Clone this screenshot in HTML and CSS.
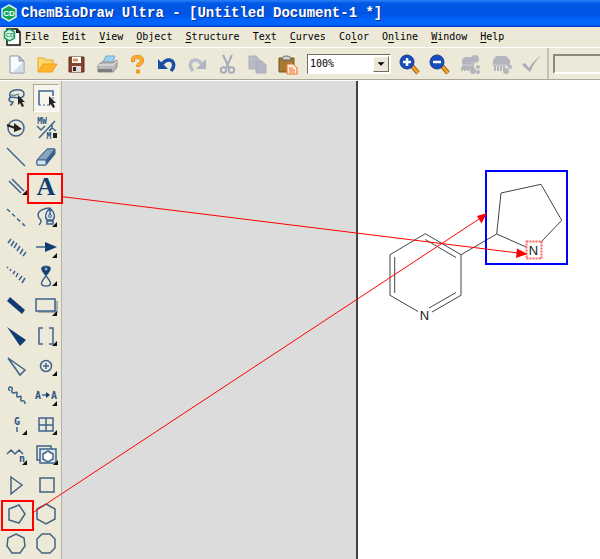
FILE: index.html
```html
<!DOCTYPE html>
<html lang="en">
<head>
  <meta charset="UTF-8" />
  <meta name="viewport" content="width=device-width, initial-scale=1" />
  <title>ChemBioDraw Ultra - [Untitled Document-1 *]</title>
  <link rel="stylesheet" href="styles.css">
</head>
<body>

<!-- Title bar -->
<header class="title-bar">
  <svg class="app-icon" width="18" height="18" viewBox="0 0 18 18">
    <path d="M9 1l7 4v8l-7 4-7-4V5z" fill="#12a35a" stroke="#d8f5e4" stroke-width="1.5"/>
    <text class="logo-text" x="9" y="12" fill="#fff">CD</text>
  </svg>
  <h1 class="title-text">ChemBioDraw Ultra - [Untitled Document-1 *]</h1>
</header>

<!-- Menu -->
<nav class="menu-bar">
  <svg class="doc-icon" width="18" height="18" viewBox="0 0 18 18">
    <path d="M4 1h10l3 3v13H4z" fill="#fff" stroke="#111" stroke-width="1.500"/>
    <path d="M13 1v4h4" fill="#111"/>
    <path d="M6.500 1l5 3v6l-5 3-5-3V4z" fill="#dff3e8" stroke="#1c9c5c" stroke-width="1.500"/>
    <text class="logo-text logo-small" x="7" y="9" fill="#1c9c5c">CD</text>
  </svg>
  <a href="#" class="menu-link"><u>F</u>ile</a>
  <a href="#" class="menu-link"><u>E</u>dit</a>
  <a href="#" class="menu-link"><u>V</u>iew</a>
  <a href="#" class="menu-link"><u>O</u>bject</a>
  <a href="#" class="menu-link"><u>S</u>tructure</a>
  <a href="#" class="menu-link">Te<u>x</u>t</a>
  <a href="#" class="menu-link"><u>C</u>urves</a>
  <a href="#" class="menu-link">Co<u>l</u>or</a>
  <a href="#" class="menu-link">O<u>n</u>line</a>
  <a href="#" class="menu-link"><u>W</u>indow</a>
  <a href="#" class="menu-link"><u>H</u>elp</a>
</nav>

<!-- Toolbar -->
<div class="toolbar">
  <button class="bar-btn" aria-label="New">
    <svg viewBox="0 0 24 24"><path d="M5 4h9l5 5v12H5z" fill="#f6fbff" stroke="#8a97a5"/><path d="M8 20h10V10z" fill="#cfe0ee"/><path d="M14 4v5h5z" fill="#b4c8d8" stroke="#8a97a5"/></svg>
  </button>
  <button class="bar-btn" aria-label="Open">
    <svg viewBox="0 0 24 24"><path d="M3 19V6h6l2 2h7v4" fill="#ffd76a" stroke="#e9a62a"/><path d="M3 20l5-8h14l-5 8z" fill="#ffb52b" stroke="#f0a020"/></svg>
  </button>
  <button class="bar-btn" aria-label="Save">
    <svg viewBox="0 0 24 24"><path d="M4 5h15v15H4z" fill="#87432b" stroke="#5e2c1c"/><path d="M7 5h9v6H7z" fill="#fff"/><path d="M7 14h9v6H7z" fill="#ddd"/><path d="M8 15h3v4H8z" fill="#44241b"/><path d="M8 6.500h5v3H8z" fill="#e2925e"/></svg>
  </button>
  <button class="bar-btn" aria-label="Print">
    <svg viewBox="0 0 24 24"><path d="M7 12l4-8h9l-3 8z" fill="#9dd3f0" stroke="#6fa9cf"/><path d="M3 13l4-3h12l3-2v7l-4 5H3z" fill="#b8b8b8" stroke="#8b8b8b"/><path d="M3 13h15l4-4" fill="none" stroke="#eee"/><path d="M3 17h14v3H3z" fill="#7d7d7d"/></svg>
  </button>
  <button class="bar-btn" aria-label="Help">
    <svg viewBox="0 0 24 24"><path d="M8 10V8q0-3 4.500-3T17 8.500q0 2-2.500 3.500-1.500 1-1.500 3" fill="none" stroke="#d98518" stroke-width="4"/><path d="M8 9V8q0-3 4.500-3T17 8.500q0 2-2.500 3.500-1.500 1-1.500 2.500" fill="none" stroke="#ffaa32" stroke-width="3"/><path d="M11 17.500h4v4h-4z" fill="#f49a20"/></svg>
  </button>
  <button class="bar-btn" aria-label="Undo">
    <svg viewBox="0 0 24 24"><path d="M7 12q5-6 10-3 4 4-1 10" fill="none" stroke="#1a4da8" stroke-width="3.500"/><path d="M3 7v10h10z" fill="#1a4da8"/></svg>
  </button>
  <button class="bar-btn" aria-label="Redo">
    <svg viewBox="0 0 24 24"><path d="M17 12q-5-6-10-3-4 4 1 10" fill="none" stroke="#b9bdc8" stroke-width="3.500"/><path d="M21 7v10H11z" fill="#b0b4c2"/></svg>
  </button>
  <button class="bar-btn" aria-label="Cut">
    <svg viewBox="0 0 24 24" fill="none" stroke="#a7abbb" stroke-width="2"><path d="M8 3l6 13M17 3l-6 13"/><circle cx="8.500" cy="18" r="2.800"/><circle cx="16.500" cy="18" r="2.800"/></svg>
  </button>
  <button class="bar-btn" aria-label="Copy">
    <svg viewBox="0 0 24 24" stroke="#aaaebb"><path d="M4 4h7l4 4v9H4z" fill="#b9bcc8"/><path d="M11 9h6l4 4v8H11z" fill="#b3b6c3"/></svg>
  </button>
  <button class="bar-btn" aria-label="Paste">
    <svg viewBox="0 0 24 24"><path d="M4 6h15v14H4z" fill="#a57a32" stroke="#76531d"/><path d="M7 8q0-4 4.500-4T16 8z" fill="#d4d8d0" stroke="#59675b"/><path d="M12 12h6l4 4v6H12z" fill="#fff0dc" stroke="#f26b21"/><path d="M14 16h4M14 18h6M14 20h6" stroke="#f26b21"/></svg>
  </button>

  <div class="zoom-box">
    <select class="zoom-select" aria-label="Zoom">
      <option>100%</option>
    </select>
    <svg class="zoom-arrow" viewBox="0 0 16 16"><path d="M4 6h8l-4 4z" fill="#000"/></svg>
  </div>

  <button class="bar-btn" aria-label="Zoom in">
    <svg viewBox="0 0 24 24"><path d="M15 14l6 7" stroke="#a5631a" stroke-width="4.500"/><path d="M15 14l6 7" stroke="#f5a52b" stroke-width="2.500"/><circle cx="10" cy="10" r="7" fill="#174bc0" stroke="#1d3c8f"/><path d="M10 6v8M6 10h8" stroke="#fff" stroke-width="2.500"/></svg>
  </button>
  <button class="bar-btn" aria-label="Zoom out">
    <svg viewBox="0 0 24 24"><path d="M15 14l6 7" stroke="#a5631a" stroke-width="4.500"/><path d="M15 14l6 7" stroke="#f5a52b" stroke-width="2.500"/><circle cx="10" cy="10" r="7" fill="#174bc0" stroke="#1d3c8f"/><path d="M6 10h8" stroke="#fff" stroke-width="2.500"/></svg>
  </button>
  <button class="bar-btn bar-btn-wide" aria-label="Clean up structure">
    <svg viewBox="0 0 24 24" fill="#b4b6be"><path d="M4 7l3-2h9v13H4z"/><circle cx="17" cy="7" r="4"/><path d="M4 15v4M7 15v4M10 15v4" stroke="#b4b6be" stroke-width="2"/><path d="M4 13h11M13 10q4 2 6 0" fill="none" stroke="#cfcfcc"/><circle cx="15" cy="19" r="3"/><circle cx="20" cy="15" r="2"/><circle cx="20" cy="20" r="2"/></svg>
  </button>
  <button class="bar-btn bar-btn-wide" aria-label="Clean up reaction">
    <svg viewBox="0 0 24 24" fill="#b4b6be"><path d="M4 8l3-4h10l4 4v6H4z"/><path d="M6 14v5M9 14v5M12 14v5M15 14v4" stroke="#b4b6be" stroke-width="2"/><path d="M4 13h14" stroke="#cfcfcc"/><circle cx="17" cy="19" r="3"/><circle cx="21" cy="15" r="2"/></svg>
  </button>
  <button class="bar-btn bar-btn-wide" aria-label="Check structure">
    <svg viewBox="0 0 24 24"><path d="M2 13l3-2 4 5Q14 8 22 3q-8 7-12 17z" fill="#a9abb8"/></svg>
  </button>

  <div class="font-group">
    <input class="font-input" type="text" aria-label="Font" disabled>
  </div>
</div>

<main class="workspace">
  <!-- Tool palette -->
  <div class="palette">
    <button class="tool" aria-label="Lasso">
      <svg viewBox="0 0 30 30"><path d="M10 15q-4-6 4-8 9-1 9 4 0 4-6 4-8-2-9 1 0 3 4 3-1 3-3 3" stroke-width="1.500"/><path d="M10 12q4 1 8-1" /><path d="M17 12v10l2-2 2 4 2-1-2-4h3z" fill="#222" stroke="none"/></svg>
    </button>
    <button class="tool selected" aria-label="Marquee">
      <svg viewBox="0 0 30 30"><path d="M8 22V8h14v5" stroke-width="1.500"/><path d="M22 14v8H8" stroke-dasharray="2 2"/><path d="M18 13v10l2-2 2 4 2-1-2-4h3z" fill="#222" stroke="none"/></svg>
    </button>
    <button class="tool" aria-label="Structure perspective">
      <svg viewBox="0 0 30 30"><circle cx="15" cy="15" r="8" stroke-width="1.500"/><path d="M6 12l8 3" stroke="#222" stroke-width="2"/><path d="M13 10l8 6-8 3z" fill="#222" stroke="none"/></svg>
    </button>
    <button class="tool" aria-label="Mass fragmentation">
      <svg viewBox="0 0 30 30" stroke-width="1.500"><path d="M24 8L8 25M6 13l4 4 4-4M21 11v4l-3 3M21 15l4 3"/><text class="tool-label" x="11" y="11">MW</text><text class="tool-label" x="18" y="26">M</text><path d="M22 20h4v5h-4z" fill="#222" stroke="none"/></svg>
    </button>
    <button class="tool" aria-label="Solid bond">
      <svg viewBox="0 0 30 30"><path d="M6 6l18 18" stroke-width="1.500"/></svg>
    </button>
    <button class="tool" aria-label="Eraser">
      <svg viewBox="0 0 30 30"><path d="M6 18L16 7h8v5l-9 11H6z" fill="#365f91"/><path d="M6 18L16 7h8l-9 11z" fill="#89a3c0"/><path d="M6 18h9v5H6z" fill="#d8e1e9"/></svg>
    </button>
    <button class="tool" aria-label="Multiple bonds">
      <svg viewBox="0 0 30 30"><path d="M8 9l12 12M11 7l12 12" stroke-width="1.500"/><path class="more" d="M26 18v5h-5z"/></svg>
    </button>
    <button class="tool tool-text" aria-label="Text">A</button>
    <button class="tool" aria-label="Dashed bond">
      <svg viewBox="0 0 30 30"><path d="M6 7l18 17" stroke-width="1.500" stroke-dasharray="4 3"/></svg>
    </button>
    <button class="tool" aria-label="Pen">
      <svg viewBox="0 0 30 30"><path d="M8 23q4-4 0-7-4-8 10-10" stroke-width="1.500"/><path d="M19 6q-7 7-3 12h6q4-5-3-12zM19 7v6M16 19h6v3h-6z" fill="#dce5e9" stroke-width="1.500"/><circle cx="19" cy="14" r="1.500"/><path class="more" d="M26 20v5h-5z"/></svg>
    </button>
    <button class="tool" aria-label="Hashed bond">
      <svg viewBox="0 0 30 30"><path d="M7 11l3-4M10 14l3-5M13 16l3-5M16 19l3-5M19 22l3-5M22 24l3-4" stroke-width="1.500"/></svg>
    </button>
    <button class="tool" aria-label="Arrow">
      <svg viewBox="0 0 30 30"><path d="M5 15h12" stroke-width="1.500"/><path d="M14 10l12 5-12 5z" fill="#103c73" stroke="none"/><path class="more" d="M26 21v5h-5z"/></svg>
    </button>
    <button class="tool" aria-label="Hashed wedge">
      <svg viewBox="0 0 30 30"><path d="M6 7l1-1M9 10l1-2M12 13l2-3M15 16l2-4M18 19l3-4M21 22l3-5" stroke-width="1.500"/></svg>
    </button>
    <button class="tool" aria-label="Orbital">
      <svg viewBox="0 0 30 30"><path d="M15 15Q6 5 15 5q9 0 0 10z" fill="#103c73"/><circle cx="15" cy="8" r="1.500" fill="#b9cee0"/><path d="M15 15q-9 10 0 10t0-10z" stroke-width="1.500"/><path class="more" d="M26 20v5h-5z"/></svg>
    </button>
    <button class="tool" aria-label="Bold bond">
      <svg viewBox="0 0 30 30"><path class="solid" d="M9 6l15 13-3 4L6 10z"/></svg>
    </button>
    <button class="tool" aria-label="Drawing elements">
      <svg viewBox="0 0 30 30"><path d="M7 10h20v12H7z" fill="#aaa" stroke="none"/><path d="M5 8h19v12H5z" fill="#ece9d8" stroke-width="1.500"/><path class="more" d="M26 20v5h-5z"/></svg>
    </button>
    <button class="tool" aria-label="Wedge bond">
      <svg viewBox="0 0 30 30"><path class="solid" d="M6 6l19 13-6 6z"/></svg>
    </button>
    <button class="tool" aria-label="Brackets">
      <svg viewBox="0 0 30 30"><path d="M12 7H8v16h4M18 7h4v16h-4" stroke-width="1.500"/><path class="more" d="M26 20v5h-5z"/></svg>
    </button>
    <button class="tool" aria-label="Hollow wedge">
      <svg viewBox="0 0 30 30"><path d="M7 7l17 12-5 5z" stroke-width="1.500"/></svg>
    </button>
    <button class="tool" aria-label="Chemical symbols">
      <svg viewBox="0 0 30 30"><circle cx="15" cy="15" r="5.500" stroke-width="1.500"/><path d="M12 15h6M15 12v6" stroke-width="1.500"/><path class="more" d="M26 20v5h-5z"/></svg>
    </button>
    <button class="tool" aria-label="Wavy bond">
      <svg viewBox="0 0 30 30"><path d="M9 11q-3-3 0-4 3 0 2 3t2 3q4-2 3 1t1 3q4-2 3 1t1 3q3-1 3 3" stroke-width="1.500"/></svg>
    </button>
    <button class="tool" aria-label="Atom map">
      <svg viewBox="0 0 30 30"><text class="tool-label tool-label-big" x="7" y="19">A</text><text class="tool-label tool-label-big" x="23" y="19">A</text><path d="M11 15h7" stroke-width="1.500"/><path d="M15 12l4 3-4 3z" fill="#103c73" stroke="none"/><path class="more" d="M26 21v5h-5z"/></svg>
    </button>
    <button class="tool" aria-label="Nickname">
      <svg viewBox="0 0 30 30"><text class="tool-label tool-label-big" x="16" y="15">G</text><path d="M16 17v5" stroke-width="1.500"/><path class="more" d="M26 20v5h-5z"/></svg>
    </button>
    <button class="tool" aria-label="Table">
      <svg viewBox="0 0 30 30"><path d="M8 8h14v13H8zM15 8v13M8 15h14" stroke-width="1.500"/><path class="more" d="M26 20v5h-5z"/></svg>
    </button>
    <button class="tool" aria-label="Chain">
      <svg viewBox="0 0 30 30"><path d="M6 14l4-4 4 4 4-4 4 4" stroke-width="1.500"/><text class="tool-label tool-label-big" x="21" y="22">n</text><path class="more" d="M26 20v5h-5z"/></svg>
    </button>
    <button class="tool" aria-label="Templates">
      <svg viewBox="0 0 30 30"><path d="M6 6h14v14H6z" stroke-width="1.500"/><path d="M9 9h16v14H9z" fill="#dce5e9" stroke-width="1.500"/><path d="M17 11l5 3v5l-5 3-5-3v-5z" fill="#fff" stroke-width="1.500"/><path class="more" d="M27 20v5h-5z"/></svg>
    </button>
    <button class="tool ring" aria-label="Cyclopropane">
      <svg viewBox="0 0 30 30"><path d="M10 7l11 8-11 9z"/></svg>
    </button>
    <button class="tool ring" aria-label="Cyclobutane">
      <svg viewBox="0 0 30 30"><path d="M9 8h14v14H9z"/></svg>
    </button>
    <button class="tool ring" aria-label="Cyclopentane">
      <svg viewBox="0 0 30 30"><path d="M8 10l10-4 6 9-6 9-10-3z"/></svg>
    </button>
    <button class="tool ring" aria-label="Cyclohexane">
      <svg viewBox="0 0 30 30"><path d="M15 5l9 5v10l-9 5-9-5V10z"/></svg>
    </button>
    <button class="tool ring" aria-label="Cycloheptane">
      <svg viewBox="0 0 30 30"><path d="M15 5l8 4 1 8-5 7h-8l-5-7 1-8z"/></svg>
    </button>
    <button class="tool ring" aria-label="Cyclooctane">
      <svg viewBox="0 0 30 30"><path d="M11 5h8l5 5v9l-5 5h-8l-5-5v-9z"/></svg>
    </button>
  </div>

  <div class="desk"></div>

  <!-- Document page with the nicotine structure -->
  <div class="page">
    <svg class="molecule" width="242" height="260" viewBox="358 81 242 260">
      <g fill="none" stroke="#444">
        <path d="M418 311.500L390 295.300V254.700L425.300 233.700 461 254.700V295.300L432 312"/>
        <path d="M394.700 257v36M425.300 239.500L456 257.500M456 292.500L429 308"/>
        <path d="M461 254.700L496.700 234 501 193 541 184.300 561.700 220.300 541 242M496.700 234L526 247"/>
      </g>
      <rect x="526.500" y="241.500" width="15" height="17" fill="none" stroke="#f66" stroke-width="2" stroke-dasharray="2 1"/>
      <text class="atom" x="424.500" y="320">N</text>
      <text class="atom" x="533.500" y="255">N</text>
      <rect x="486" y="171" width="81" height="93" fill="none" stroke="#00f" stroke-width="2"/>
    </svg>
  </div>
</main>

<!-- Callouts over the window -->
<svg class="callouts" width="600" height="559" viewBox="0 0 600 559">
  <g fill="none" stroke="#f00">
    <rect x="28" y="174" width="34" height="29" stroke-width="2"/>
    <rect x="2" y="501" width="31" height="29" stroke-width="2"/>
    <path d="M61 196.500L518 253M34 512L479 219"/>
  </g>
  <path d="M527.500 254L517 248.500 516 258zM487 213L477 216 481.500 223.500z" fill="#f00"/>
</svg>

</body>
</html>
```
FILE: styles.css
```css
* {
  margin: 0;
  padding: 0;
  box-sizing: border-box;
}
body {
  font-family: "DejaVu Sans Mono", monospace;
  font-size: 10px;
  color: #000;
  background: #ece9d8;
  min-height: 100vh;
  display: flex;
  flex-direction: column;
  position: relative;
  overflow: hidden;
}
button {
  background: none;
  border: none;
}

/* Title bar */
.title-bar {
  display: flex;
  align-items: center;
  gap: 3px;
  height: 27px;
  padding-bottom: 1px;
  background: linear-gradient(#2a80f5 0%, #0058e6 12%, #0054e3 50%, #0066ff 80%, #0062f5 92%, #0038b8 100%);
}
.title-text {
  font-family: "Liberation Mono", monospace;
  font-size: 14px;
  line-height: 18px;
  font-weight: bold;
  color: #fff;
  text-shadow: 1px 1px #0a2f8c;
  white-space: nowrap;
}
.logo-text {
  font-family: "Liberation Sans", Arial, sans-serif;
  font-size: 8px;
  font-weight: bold;
  text-anchor: middle;
}
.logo-small {
  font-size: 6px;
}

/* Menu */
.menu-bar {
  display: flex;
  align-items: center;
  gap: 13px;
  height: 20px;
  padding-left: 3px;
}
.doc-icon {
  margin-right: -9px;
}
.menu-link {
  color: #000;
  line-height: 14px;
  text-decoration: none;
}
.menu-link u {
  text-underline-offset: 2px;
}

/* Toolbar */
.toolbar {
  display: flex;
  align-items: center;
  height: 33px;
  padding-left: 2px;
  border-top: 1px solid #fff;
  border-bottom: 1px solid #aca899;
}
.bar-btn {
  flex: none;
  width: 30px;
  height: 28px;
  display: flex;
  align-items: center;
  justify-content: center;
}
.bar-btn-wide {
  width: 31px;
}
.bar-btn svg {
  flex: none;
  width: 24px;
  height: 24px;
}
.zoom-box {
  flex: none;
  position: relative;
  width: 84px;
  height: 20px;
  margin: 0 3px 0 5px;
}
.zoom-select {
  appearance: none;
  width: 100%;
  height: 100%;
  padding-left: 2px;
  font: inherit;
  color: #000;
  background: #fff;
  border: 1px solid;
  border-color: #716f64 #fff #fff #716f64;
  border-radius: 0;
}
.zoom-arrow {
  position: absolute;
  top: 2px;
  right: 2px;
  width: 16px;
  height: 16px;
  background: #ece9d8;
  border: 1px solid;
  border-color: #fff #716f64 #716f64 #fff;
  pointer-events: none;
}
.font-group {
  flex: 1;
  align-self: stretch;
  display: flex;
  align-items: center;
  padding-left: 4px;
  border-left: 2px solid #c4c1b2;
  overflow: hidden;
}
.font-input {
  flex: none;
  width: 150px;
  height: 20px;
  background: #ece9d8;
  border: 2px solid;
  border-color: #8b897c #fff #fff #8b897c;
}

/* Workspace */
.workspace {
  flex: 1;
  display: flex;
  border-top: 1px solid #fff;
}
.palette {
  flex: none;
  width: 62px;
  padding: 2px 0 0 1px;
  display: grid;
  grid-template-columns: 30px 30px;
  grid-auto-rows: 1fr;
  border-right: 1px solid #b5b3a8;
}
.tool {
  display: flex;
  align-items: center;
  justify-content: center;
  min-height: 0;
}
.tool svg {
  flex: none;
  width: 30px;
  height: 30px;
  margin: -4px 0;
  fill: none;
  stroke: #3e648d;
}
.tool .more {
  fill: #111;
  stroke: none;
}
.tool .solid {
  fill: #103c73;
  stroke: none;
}
.tool-label {
  font-family: "DejaVu Sans Mono", monospace;
  font-size: 8px;
  font-weight: bold;
  text-anchor: middle;
  fill: #2c5484;
  stroke: none;
}
.tool-label-big {
  font-size: 10px;
}
.ring svg {
  stroke: #456481;
  stroke-width: 1.5px;
}
.tool.selected {
  background: #f6f4ec;
  border: 1px solid;
  border-color: #aca899 #fff #fff #aca899;
  margin: 1px 2px;
}
.tool-text {
  font-family: "Liberation Serif", serif;
  font-size: 26px;
  line-height: 26px;
  font-weight: bold;
  color: #103c73;
}
.desk {
  flex: none;
  width: 49%;
  background: #dcdcdc;
}
.page {
  flex: 1;
  background: #fff;
  border-left: 2px solid #444;
  overflow: hidden;
}
.molecule {
  display: block;
}
.atom {
  font-family: "Liberation Sans", Arial, sans-serif;
  font-size: 13px;
  text-anchor: middle;
  fill: #222;
}
.callouts {
  position: absolute;
  top: 0;
  left: 0;
  pointer-events: none;
}
```
